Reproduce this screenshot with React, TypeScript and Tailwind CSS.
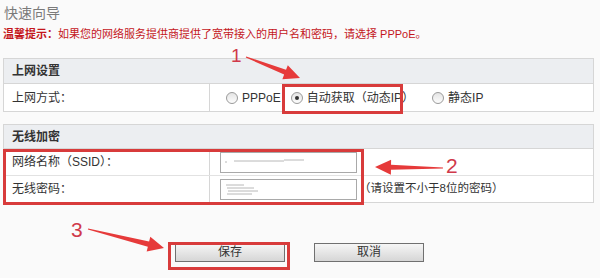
const font = "font-['Liberation_Sans','Noto_Sans_CJK_SC',sans-serif]";

type Pt = [number, number];

// tapered red arrow, from a thin tail to a triangular head
function arrowPoints(tail: Pt, tip: Pt) {
  const [x1, y1] = tail;
  const [x2, y2] = tip;
  const len = Math.hypot(x2 - x1, y2 - y1);
  const ux = (x2 - x1) / len;
  const uy = (y2 - y1) / len;
  const nx = -uy;
  const ny = ux;
  const head = 16;
  const bx = x2 - ux * head;
  const by = y2 - uy * head;
  const p = (x: number, y: number, w: number) => `${x + nx * w},${y + ny * w}`;
  return [
    p(x1, y1, 0.6),
    p(bx, by, 2.6),
    p(bx, by, 7.5),
    `${x2},${y2}`,
    p(bx, by, -7.5),
    p(bx, by, -2.6),
    p(x1, y1, -0.6),
  ].join(" ");
}

function Radio({ checked, label }: { checked?: boolean; label: string }) {
  return (
    <label className="flex items-center gap-[4px]">
      <span className="w-[12px] h-[12px] rounded-full border border-[#9a9a9a] bg-gradient-to-b from-[#e4e4e4] to-[#fdfdfd] flex items-center justify-center">
        {checked && <span className="w-[4px] h-[4px] rounded-full bg-[#333]" />}
      </span>
      <span>{label}</span>
    </label>
  );
}

function Scribble({ lines }: { lines: number[][] }) {
  return (
    <svg width="120" height="18" className="absolute left-[3px] top-[1px]">
      {lines.map(([x1, y1, x2], i) => (
        <line key={i} x1={x1} y1={y1} x2={x2} y2={y1} stroke="#b8b8b8" strokeWidth="1" />
      ))}
    </svg>
  );
}

export default function App() {
  return (
    <div className={`${font} relative w-[600px] h-[278px] overflow-hidden bg-[#fafafa] text-[12px] text-[#333]`}>
      <div className="pl-[4px] pt-[4px] text-[14px] leading-[18px] text-[#7a7a7a]">快速向导</div>
      <div className="pl-[3px] mt-[4px] text-[11px] leading-[16px] text-[#c4161c]">
        <span className="font-bold">温馨提示：</span>如果您的网络服务提供商提供了宽带接入的用户名和密码，请选择 PPPoE。
      </div>

      <div className="ml-[3px] mt-[16px] w-[591px] border border-[#d6d6d6] bg-white">
        <div className="h-[25px] px-[8px] flex items-center bg-[#eceef1] border-b border-[#d6d6d6] font-bold">上网设置</div>
        <div className="flex h-[27px]">
          <div className="w-[206px] border-r border-[#d6d6d6] px-[8px] flex items-center">上网方式：</div>
          <div className="flex items-center pl-[16px] gap-[10px]">
            <Radio label="PPPoE" />
            <Radio checked label="自动获取（动态IP）" />
            <span className="ml-[8px]"><Radio label="静态IP" /></span>
          </div>
        </div>
      </div>

      <div className="ml-[3px] mt-[12px] w-[591px] border border-[#d6d6d6] bg-white">
        <div className="h-[24px] px-[8px] flex items-center bg-[#eceef1] border-b border-[#d6d6d6] font-bold">无线加密</div>
        <div className="flex h-[27px] border-b border-[#e2e2e2]">
          <div className="w-[206px] border-r border-[#d6d6d6] px-[8px] flex items-center">网络名称（SSID）：</div>
          <div className="flex items-center pl-[10px]">
            <div className="relative w-[137px] h-[21px] border border-[#a9a9a9] bg-white">
              <Scribble lines={[[1, 8, 3], [10, 7, 60], [60, 6, 80]]} />
            </div>
          </div>
        </div>
        <div className="flex h-[26px]">
          <div className="w-[206px] border-r border-[#d6d6d6] px-[8px] flex items-center">无线密码：</div>
          <div className="flex items-center pl-[10px]">
            <div className="relative w-[137px] h-[21px] border border-[#a9a9a9] bg-white">
              <Scribble lines={[[2, 4, 20], [3, 7, 30], [4, 10, 34], [3, 13, 28]]} />
            </div>
            <span className="ml-[2px] text-[11.5px]">（请设置不小于8位的密码）</span>
          </div>
        </div>
      </div>

      <div className="flex mt-[40px] pl-[175px] gap-[29px]">
        <button className="w-[110px] h-[19px] border border-[#707070] bg-gradient-to-b from-[#f6f6f6] to-[#d6d6d6] text-[12px] leading-[17px]">保存</button>
        <button className="w-[110px] h-[19px] border border-[#707070] bg-gradient-to-b from-[#f6f6f6] to-[#d6d6d6] text-[12px] leading-[17px]">取消</button>
      </div>

      {/* annotation boxes */}
      <div className="absolute left-[282px] top-[84px] w-[121px] h-[30px] border-[3px] border-[#d83b3b]" />
      <div className="absolute left-[3px] top-[149px] w-[361px] h-[56px] border-[3px] border-[#d83b3b]" />
      <div className="absolute left-[168px] top-[242px] w-[122px] h-[28px] border-[3px] border-[#d83b3b]" />

      {/* annotation arrows */}
      <svg width="600" height="278" className="absolute left-0 top-0">
        <polygon points={arrowPoints([246, 57], [300, 78])} fill="#e63a3a" />
        <polygon points={arrowPoints([443, 168], [375, 167])} fill="#e63a3a" />
        <polygon points={arrowPoints([88, 229], [164, 248])} fill="#e63a3a" />
      </svg>
      <span className="absolute left-[231px] top-[46px] text-[19px] leading-[20px] text-[#d0394a]">1</span>
      <span className="absolute left-[446px] top-[156px] text-[21px] leading-[20px] text-[#d0394a]">2</span>
      <span className="absolute left-[71px] top-[220px] text-[21px] leading-[20px] text-[#d0394a]">3</span>
    </div>
  );
}
